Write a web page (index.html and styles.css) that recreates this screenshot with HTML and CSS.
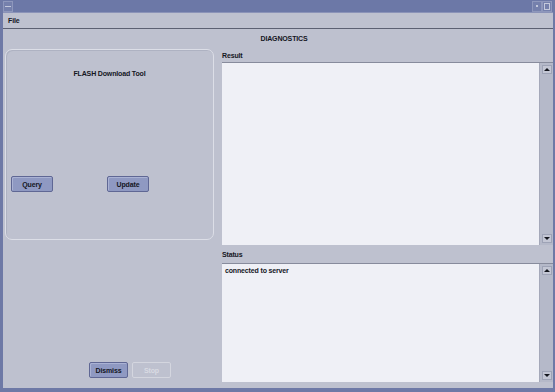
FILE: index.html
```html
<!DOCTYPE html>
<html lang="en">
<head>
    <meta charset="UTF-8">
    <title>Diagnostics</title>
    <link rel="stylesheet" href="styles.css">
</head>
<body>
    <div class="window">
        <div class="titleBar">
            <span class="titleButton menuButton"><span class="dash"></span></span>
            <span class="titleSpacer"></span>
            <span class="titleButton minButton"><span class="dot"></span></span>
            <span class="titleButton maxButton"><span class="square"></span></span>
        </div>
        <div class="menuBar">
            <span class="menuItem">File</span>
        </div>

        <div class="heading">DIAGNOSTICS</div>

        <div class="content">
            <div class="leftColumn">
                <div class="toolPanel">
                    <div class="panelTitle">FLASH Download Tool</div>
                    <div class="panelButtons">
                        <button class="btn">Query</button>
                        <button class="btn">Update</button>
                    </div>
                </div>
                <div class="bottomButtons">
                    <button class="btn">Dismiss</button>
                    <button class="btn disabled">Stop</button>
                </div>
            </div>

            <div class="rightColumn">
                <div class="fieldLabel">Result</div>
                <div class="textBox resultBox">
                    <div class="textArea"></div>
                    <div class="scrollBar">
                        <span class="arrow up"></span>
                        <span class="arrow down"></span>
                    </div>
                </div>
                <div class="fieldLabel statusLabel">Status</div>
                <div class="textBox statusBox">
                    <div class="textArea">connected to server</div>
                    <div class="scrollBar">
                        <span class="arrow up"></span>
                        <span class="arrow down"></span>
                    </div>
                </div>
            </div>
        </div>
    </div>
</body>
</html>
```

FILE: styles.css
```css
* {
    box-sizing: border-box;
}

body {
    margin: 0;
    font-family: 'Liberation Sans', Arial, sans-serif;
    font-size: 7px;
    font-weight: bold;
    letter-spacing: -0.15px;
    color: #14161e;
    background-color: #bec1cf;
}

.window {
    width: 555px;
    height: 392px;
    display: flex;
    flex-direction: column;
    background-color: #bec1cf;
    border-left: 3px solid #6e79a6;
    border-right: 2px solid #6e79a6;
    border-bottom: 4px solid #6e79a6;
}

.titleBar {
    height: 13px;
    display: flex;
    align-items: center;
    background-color: #6c78a7;
    border-bottom: 1px solid #8b93b8;
    padding: 0 1px 0 0;
}

.titleSpacer {
    flex: 1;
}

.titleButton {
    width: 10px;
    height: 11px;
    display: flex;
    justify-content: center;
    align-items: center;
    background-color: #7580ac;
    border: 1px solid #8e97bc;
}

.dash {
    width: 6px;
    height: 1px;
    background-color: #c4c9dc;
}

.dot {
    width: 2px;
    height: 2px;
    background-color: #c4c9dc;
}

.square {
    width: 6px;
    height: 7px;
    border: 1px solid #c4c9dc;
}

.menuBar {
    height: 16px;
    display: flex;
    align-items: center;
    padding-left: 5px;
    border-bottom: 1px solid #5c6072;
}

.heading {
    height: 19px;
    line-height: 19px;
    text-align: center;
    padding-left: 12px;
}

.content {
    flex: 1;
    display: flex;
    gap: 8px;
    padding-bottom: 6px;
}

.leftColumn {
    width: 209px;
    margin-left: 2px;
    display: flex;
    flex-direction: column;
}

.toolPanel {
    height: 191px;
    margin-top: 1px;
    border: 1px solid #dcdee7;
    border-radius: 7px;
    box-shadow: inset 1px 1px 0 #aeb2c2;
    padding: 20px 5px 0 5px;
}

.panelTitle {
    text-align: center;
}

.panelButtons {
    display: flex;
    gap: 54px;
    margin-top: 99px;
}

.btn {
    width: 42px;
    height: 16px;
    padding: 0;
    font-family: inherit;
    font-size: 7px;
    font-weight: bold;
    letter-spacing: -0.15px;
    color: #14161e;
    background-color: #8f99c2;
    border: 1px solid #5f6794;
    border-radius: 2px;
    box-shadow: inset 1px 1px 0 #aab2d4;
}

.bottomButtons {
    margin-top: auto;
    margin-bottom: 4px;
    display: flex;
    gap: 4px;
    padding-left: 84px;
}

.bottomButtons .btn {
    width: 39px;
}

.btn.disabled {
    color: #d9dbe3;
    background-color: #bec1cf;
    border-color: #d4d6df;
    box-shadow: none;
}

.rightColumn {
    flex: 1;
    display: flex;
    flex-direction: column;
}

.fieldLabel {
    height: 14px;
    padding-top: 4px;
}

.statusLabel {
    height: 18px;
    padding-top: 6px;
}

.textBox {
    display: flex;
    border-top: 1px solid #878b9c;
}

.resultBox {
    height: 183px;
}

.statusBox {
    flex: 1;
}

.textArea {
    flex: 1;
    background-color: #eff0f6;
    padding: 3px 3px;
}

.scrollBar {
    width: 14px;
    display: flex;
    flex-direction: column;
    justify-content: space-between;
    align-items: center;
    background-color: #b5b9c9;
    border-left: 1px solid #a4a8b9;
    padding: 2px 0;
}

.arrow {
    width: 10px;
    height: 9px;
    display: flex;
    justify-content: center;
    align-items: center;
    background-color: #c3c6d4;
    border: 1px solid #9ea3b6;
}

.arrow::after {
    content: '';
    width: 0;
    height: 0;
    border-left: 3px solid transparent;
    border-right: 3px solid transparent;
}

.arrow.up::after {
    border-bottom: 3px solid #14161e;
}

.arrow.down::after {
    border-top: 3px solid #14161e;
}
```
